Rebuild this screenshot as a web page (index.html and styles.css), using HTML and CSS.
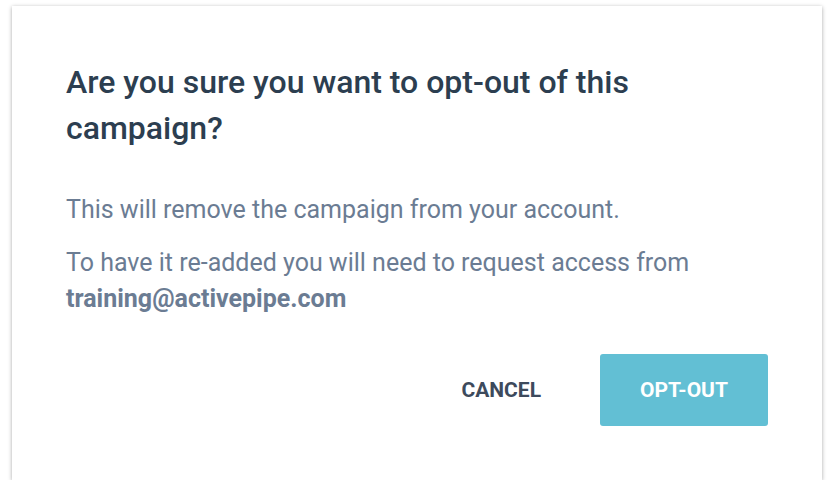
FILE: index.html
```html
<!DOCTYPE html>
<html>
<head>
<meta charset="utf-8">
<link rel="stylesheet" href="styles.css">
</head>
<body>
<div class="dialog">
  <h2 class="title">Are you sure you want to opt-out of this campaign?</h2>
  <p class="text">This will remove the campaign from your account.</p>
  <p class="text text-last">To have it re-added you will need to request access from <strong>training@activepipe.com</strong></p>
  <div class="actions">
    <button class="btn btn-cancel">CANCEL</button>
    <button class="btn btn-primary">OPT-OUT</button>
  </div>
</div>
</body>
</html>
```
FILE: styles.css
```css
html, body {
  margin: 0;
  padding: 0;
  background: #ffffff;
}
body {
  padding: 6px 11px 0 12px;
  font-family: Roboto, "Liberation Sans", sans-serif;
}
.dialog {
  box-sizing: border-box;
  width: 810px;
  height: 474px;
  background: #fff;
  box-shadow: 0 1px 4px rgba(0, 0, 0, 0.35);
  padding: 53px 54px 54px 54px;
}
.title {
  margin: 0 0 41px 0;
  font-size: 32px;
  line-height: 46px;
  font-weight: 500;
  color: #2c3e50;
}
.text {
  margin: 0 0 17px 0;
  font-size: 25px;
  line-height: 36px;
  color: #6b7c93;
}
.text strong {
  font-weight: 700;
}
.text-last {
  margin-bottom: 37px;
}
.actions {
  display: flex;
  justify-content: flex-end;
  gap: 19px;
}
.btn {
  font-family: Roboto, "Liberation Sans", sans-serif;
  font-size: 21px;
  font-weight: 700;
  height: 72px;
  padding: 0 40px;
  border: none;
  border-radius: 3px;
  cursor: pointer;
}
.btn-cancel {
  background: transparent;
  color: #3d4a5c;
}
.btn-primary {
  background: #62bfd4;
  color: #ffffff;
  width: 168px;
}
```
